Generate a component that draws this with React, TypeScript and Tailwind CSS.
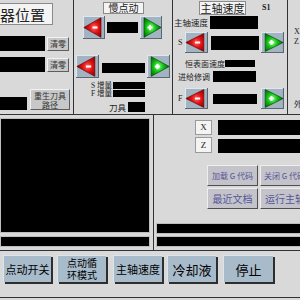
import React from "react";

const serif = "font-['Liberation_Serif','Noto_Sans_CJK_SC',serif]";

function Arrow({ dir, w = 22, h = 23 }: { dir: "l" | "r"; w?: number; h?: number }) {
  const red = dir === "l";
  return (
    <svg width={w} height={h} viewBox="0 0 22 22" preserveAspectRatio="none" className="block shrink-0">
      <defs>
        <radialGradient id="gRed" cx="0.6" cy="0.5" r="0.6">
          <stop offset="0" stopColor="#ff6a6a" />
          <stop offset="0.45" stopColor="#e41212" />
          <stop offset="1" stopColor="#8a0000" />
        </radialGradient>
        <radialGradient id="gGreen" cx="0.4" cy="0.5" r="0.6">
          <stop offset="0" stopColor="#8aff8a" />
          <stop offset="0.45" stopColor="#14c414" />
          <stop offset="1" stopColor="#006400" />
        </radialGradient>
      </defs>
      <rect x="0" y="0" width="22" height="22" fill="#a2b3c1" />
      <path d="M0 0H22V1H1V22H0Z" fill="#dfe7ee" />
      <path d="M22 22H0V21H21V0H22Z" fill="#5b6874" />
      {red ? (
        <>
          <polygon points="0.8,11 18,1.6 18,20.4" fill="url(#gRed)" stroke="#5a0000" strokeWidth="0.6" />
          <rect x="9.5" y="10" width="5" height="2" fill="#fff" />
        </>
      ) : (
        <>
          <polygon points="21.2,11 4,1.6 4,20.4" fill="url(#gGreen)" stroke="#004000" strokeWidth="0.6" />
          <rect x="7.5" y="10" width="5" height="2" fill="#fff" />
          <rect x="9" y="8.5" width="2" height="5" fill="#fff" />
        </>
      )}
    </svg>
  );
}

const grayBtn =
  "flex items-center justify-center bg-[#c8c8c8] border border-t-[#f2f2f2] border-l-[#f2f2f2] border-r-[#5e5e5e] border-b-[#5e5e5e] text-[#333] leading-none text-center";

const gBtn =
  "w-[51px] h-[21px] shrink-0 flex items-center justify-center whitespace-nowrap overflow-hidden bg-[#c3c3c9] border border-t-[#eeeeee] border-l-[#eeeeee] border-r-[#4e4e4e] border-b-[#4e4e4e] text-[#55559a] leading-none";

const botBtn =
  "h-[27px] shrink-0 flex items-center justify-center text-center bg-[#a8bbcb] border-t border-l border-t-[#dbe5ee] border-l-[#dbe5ee] shadow-[2px_2px_0_#2e2e2e] text-black leading-none";

export default function App() {
  return (
    <div className="w-[300px] h-[300px] overflow-hidden bg-[#d9d9d9] flex flex-col font-['Noto_Sans_CJK_SC',sans-serif] text-[#222]">
      {/* TOP */}
      <div className="h-[115px] shrink-0 flex border-b border-[#333]">
        {/* left panel */}
        <div className="w-[74px] shrink-0 border-r border-[#333] flex flex-col">
          <div className="mt-[3px] w-[53px] h-[22px] bg-[#f4f4f4] border border-l-0 border-[#8a8a8a] flex items-center justify-end pr-[7px] overflow-hidden whitespace-nowrap text-[15px] leading-none text-[#222]">
            器位置
          </div>
          <div className="mt-[11px] flex items-center gap-[2px]">
            <div className="w-[45px] h-[15px] bg-black" />
            <div className={`${grayBtn} w-[22px] h-[14px] text-[8px]`}>清零</div>
          </div>
          <div className="mt-[6px] flex items-center gap-[2px]">
            <div className="w-[45px] h-[15px] bg-black" />
            <div className={`${grayBtn} w-[22px] h-[14px] text-[8px]`}>清零</div>
          </div>
          <div className="mt-[17px] flex items-end gap-[3px]">
            <div className="w-[27px] h-[13px] bg-black" />
            <div className={`${grayBtn} w-[40px] h-[21px] text-[8px]`}>
              <span className="block leading-[9px]">
                重生刀具
                <br />
                路径
              </span>
            </div>
          </div>
        </div>

        {/* middle panel */}
        <div className="w-[99px] shrink-0 border-r border-[#333] flex flex-col">
          <div className="mt-[2px] ml-[29px] w-[41px] h-[12px] bg-[#f4f4f4] border border-[#8a8a8a] flex items-center justify-center text-[10px] leading-none">
            慢点动
          </div>
          <div className="mt-[2px] ml-[9px] flex items-center">
            <Arrow dir="l" w={22} h={23} />
            <div className="ml-[2px] w-[31px] h-[11px] bg-black" />
            <div className="ml-[2px]">
              <Arrow dir="r" w={22} h={23} />
            </div>
          </div>
          <div className="mt-[16px] ml-[2px] flex items-center">
            <Arrow dir="l" w={23} h={23} />
            <div className="ml-[3px] mt-[3px] w-[43px] h-[10px] bg-black" />
            <div className="ml-[2px]">
              <Arrow dir="r" w={23} h={23} />
            </div>
          </div>
          <div className="mt-[4px] h-[7px] flex items-center justify-end pr-[27px]">
            <span className={`${serif} text-[7.5px] leading-none mr-[1px] whitespace-nowrap`}>S 增量</span>
            <div className="w-[32px] h-[7px] bg-black" />
          </div>
          <div className="mt-[1px] h-[7px] flex items-center justify-end pr-[27px]">
            <span className={`${serif} text-[7.5px] leading-none mr-[1px] whitespace-nowrap`}>F 增量</span>
            <div className="w-[32px] h-[7px] bg-black" />
          </div>
          <div className="mt-[5px] h-[10px] flex items-center justify-end pr-[27px]">
            <span className="text-[8.5px] leading-none mr-[2px] whitespace-nowrap">刀具</span>
            <div className="w-[17px] h-[10px] bg-black" />
          </div>
        </div>

        {/* spindle panel */}
        <div className="w-[115px] shrink-0 border-r border-[#333] flex flex-col">
          <div className="mt-[1px] flex items-center">
            <div className="ml-[26px] w-[47px] h-[14px] bg-[#f4f4f4] border border-[#8a8a8a] flex items-center justify-center text-[11px] leading-none whitespace-nowrap">
              主轴速度
            </div>
            <span className={`${serif} ml-[16px] text-[8px] font-bold leading-none`}>S1</span>
          </div>
          <div className="mt-[1px] h-[13px] flex items-center">
            <span className="w-[37px] pl-[1px] text-[8.5px] leading-none whitespace-nowrap">主轴速度</span>
            <div className="w-[48px] h-[13px] bg-black" />
          </div>
          <div className="mt-[3px] flex items-center">
            <span className={`${serif} w-[12px] pl-[5px] text-[8px] leading-none`}>S</span>
            <Arrow dir="l" w={23} h={21} />
            <div className="ml-[3px] w-[48px] h-[14px] bg-black" />
            <div className="ml-[2px]">
              <Arrow dir="r" w={23} h={21} />
            </div>
          </div>
          <div className="mt-[7px] h-[7px] flex items-center">
            <span className="ml-[12px] w-[40px] text-[8px] leading-none whitespace-nowrap">恒表面速度</span>
            <div className="w-[30px] h-[7px] bg-black" />
          </div>
          <div className="mt-[4px] h-[11px] flex items-center">
            <span className="ml-[5px] w-[35px] text-[8px] leading-none whitespace-nowrap">进给修调</span>
            <div className="w-[43px] h-[11px] bg-black" />
          </div>
          <div className="mt-[6px] flex items-center">
            <span className={`${serif} w-[12px] pl-[5px] text-[8px] leading-none`}>F</span>
            <Arrow dir="l" w={23} h={21} />
            <div className="ml-[5px] w-[44px] h-[10px] bg-black" />
            <div className="ml-[4px]">
              <Arrow dir="r" w={23} h={21} />
            </div>
          </div>
        </div>

        {/* far right partial */}
        <div className={`flex-1 flex flex-col pl-[6px] text-[8px] leading-none ${serif}`}>
          <span className="mt-[28px]">X</span>
          <span className="mt-[2px]">Z</span>
          <span className="mt-[55px]">外</span>
        </div>
      </div>

      {/* MIDDLE */}
      <div className="h-[136px] shrink-0 flex border-b border-[#333]">
        <div className="w-[153px] shrink-0 flex flex-col pt-[3px]">
          <div className="w-[150px] h-[115px] bg-black border border-[#bdbdbd]" />
          <div className="mt-[3px] w-[150px] h-[11px] bg-black border border-[#bdbdbd]" />
        </div>
        <div className="flex-1 border-l border-[#333] flex flex-col">
          <div className="mt-[5px] flex items-center">
            <div className={`${serif} ml-[41px] w-[17px] h-[15px] bg-[#f4f4f4] border border-[#9a9a9a] flex items-center justify-center text-[9px] leading-none`}>
              X
            </div>
            <div className="ml-[6px] flex-1 h-[15px] bg-black" />
          </div>
          <div className="mt-[2px] flex items-end">
            <div className={`${serif} ml-[41px] w-[17px] h-[16px] bg-[#f4f4f4] border border-[#9a9a9a] flex items-center justify-center text-[9px] leading-none`}>
              Z
            </div>
            <div className="ml-[6px] flex-1 h-[14px] bg-black" />
          </div>
          <div className="mt-[12px] ml-[53px] flex gap-[2px]">
            <div className={`${gBtn} text-[8px]`}>加载 G 代码</div>
            <div className={`${gBtn} text-[8px] justify-start pl-[3px]`}>关闭 G 代码</div>
          </div>
          <div className="mt-[2px] ml-[53px] flex gap-[2px]">
            <div className={`${gBtn} text-[10px]`}>最近文档</div>
            <div className={`${gBtn} text-[10px] justify-start pl-[4px]`}>运行主轴</div>
          </div>
          <div className="mt-[14px] ml-[2px] h-[11px] bg-black border border-[#bdbdbd] border-r-0" />
          <div className="mt-[2px] ml-[2px] h-[11px] bg-black border border-[#bdbdbd] border-r-0" />
        </div>
      </div>

      {/* BOTTOM */}
      <div className="h-[47px] shrink-0 border-b border-[#333] flex items-start pt-[4px]">
        <div className={`${botBtn} ml-[3px] w-[48px] text-[11px]`}>点动开关</div>
        <div className={`${botBtn} ml-[6px] w-[49px] text-[10px]`}>
          <span className="block leading-[12px]">
            点动循
            <br />
            环模式
          </span>
        </div>
        <div className={`${botBtn} ml-[7px] w-[49px] text-[11px]`}>主轴速度</div>
        <div className={`${botBtn} ml-[5px] w-[49px] text-[13px]`}>冷却液</div>
        <div className={`${botBtn} ml-[7px] w-[50px] text-[13px]`}>停止</div>
      </div>
    </div>
  );
}
